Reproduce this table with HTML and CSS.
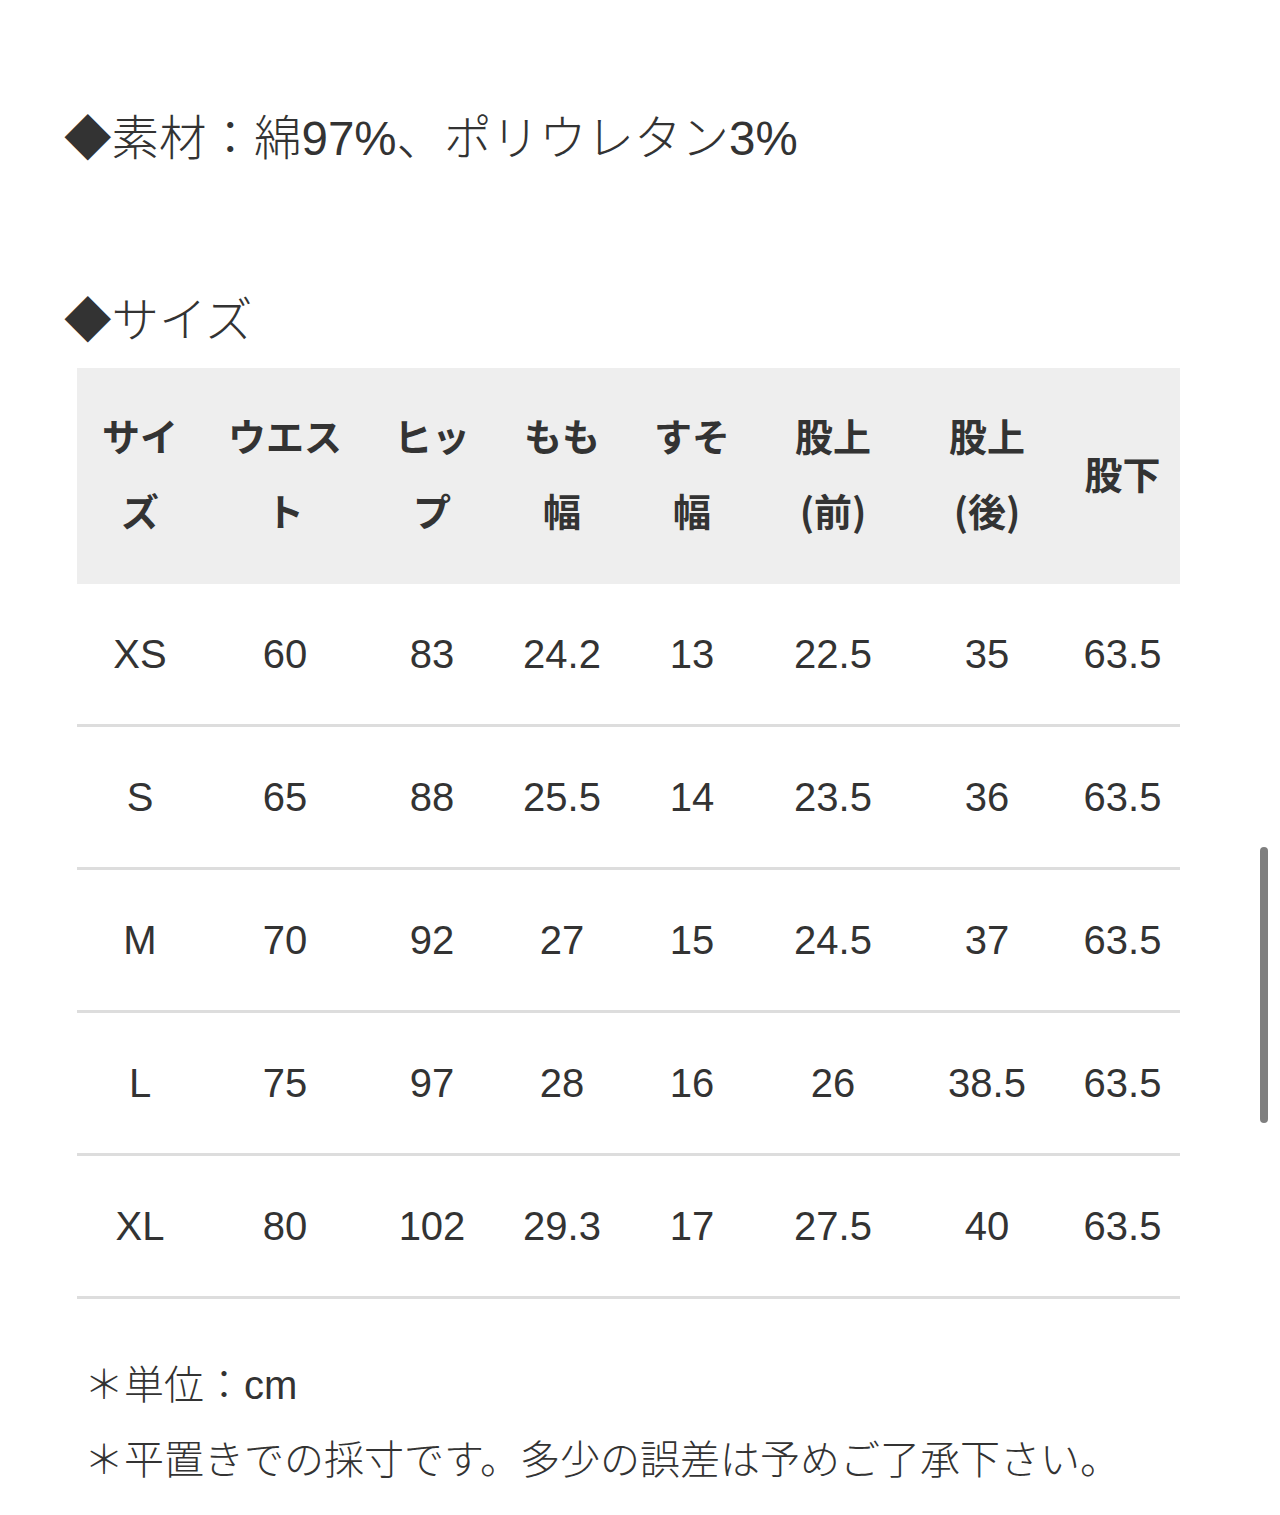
FILE: index.html
```html
<!DOCTYPE html>
<html lang="ja">
<head>
<meta charset="utf-8">
<title>サイズ</title>
<link rel="stylesheet" href="styles.css">
</head>
<body>
<div class="page">
  <p class="heading heading-material">◆素材：綿97%、ポリウレタン3%</p>
  <p class="heading heading-size">◆サイズ</p>
  <table class="size-table">
    <colgroup>
      <col class="c1"><col class="c2"><col class="c3"><col class="c4"><col class="c5"><col class="c6"><col class="c7"><col class="c8">
    </colgroup>
    <thead>
      <tr>
        <th>サイ<br>ズ</th>
        <th>ウエス<br>ト</th>
        <th>ヒッ<br>プ</th>
        <th>もも<br>幅</th>
        <th>すそ<br>幅</th>
        <th>股上<br>(前)</th>
        <th>股上<br>(後)</th>
        <th>股下</th>
      </tr>
    </thead>
    <tbody>
      <tr><td>XS</td><td>60</td><td>83</td><td>24.2</td><td>13</td><td>22.5</td><td>35</td><td>63.5</td></tr>
      <tr><td>S</td><td>65</td><td>88</td><td>25.5</td><td>14</td><td>23.5</td><td>36</td><td>63.5</td></tr>
      <tr><td>M</td><td>70</td><td>92</td><td>27</td><td>15</td><td>24.5</td><td>37</td><td>63.5</td></tr>
      <tr><td>L</td><td>75</td><td>97</td><td>28</td><td>16</td><td>26</td><td>38.5</td><td>63.5</td></tr>
      <tr><td>XL</td><td>80</td><td>102</td><td>29.3</td><td>17</td><td>27.5</td><td>40</td><td>63.5</td></tr>
    </tbody>
  </table>
  <p class="note note-first">＊単位：cm</p>
  <p class="note">＊平置きでの採寸です。多少の誤差は予めご了承下さい。</p>
</div>
<div class="scrollbar"></div>
</body>
</html>
```

FILE: styles.css
```css
html, body {
  margin: 0;
  padding: 0;
  background: #ffffff;
}

body {
  font-family: "Liberation Sans", "Noto Sans CJK JP", sans-serif;
  color: #333333;
  position: relative;
  min-height: 1515px;
}

.page {
  padding-top: 104px;
}

.heading {
  margin: 0;
  padding-left: 64px;
  font-size: 47.5px;
  line-height: 69px;
  font-weight: 300;
  color: #333333;
}

.heading-size {
  margin-top: 113px;
}

.size-table {
  margin: 13px 0 0 77px;
  width: 1103px;
  table-layout: fixed;
  border-collapse: collapse;
  font-size: 40px;
}

.c1 { width: 126px; }
.c2 { width: 164px; }
.c3 { width: 130px; }
.c4 { width: 130px; }
.c5 { width: 130px; }
.c6 { width: 152px; }
.c7 { width: 156px; }
.c8 { width: 115px; }

.size-table th {
  background: #eeeeee;
  font-family: "Noto Sans CJK JP", sans-serif;
  font-weight: 700;
  font-size: 38px;
  line-height: 75px;
  padding: 29px 0 37px;
  text-align: center;
  vertical-align: middle;
  color: #333333;
}

.size-table td {
  height: 140px;
  padding: 0;
  text-align: center;
  vertical-align: middle;
  border-bottom: 3px solid #dddddd;
  color: #333333;
}

.note {
  margin: 0;
  padding-left: 84px;
  font-size: 40px;
  line-height: 75px;
  font-weight: 300;
  color: #333333;
}

.note-first {
  margin-top: 49px;
}

.scrollbar {
  position: absolute;
  top: 847px;
  right: 12px;
  width: 8px;
  height: 276px;
  border-radius: 4px;
  background: #7f7f7f;
}
```
